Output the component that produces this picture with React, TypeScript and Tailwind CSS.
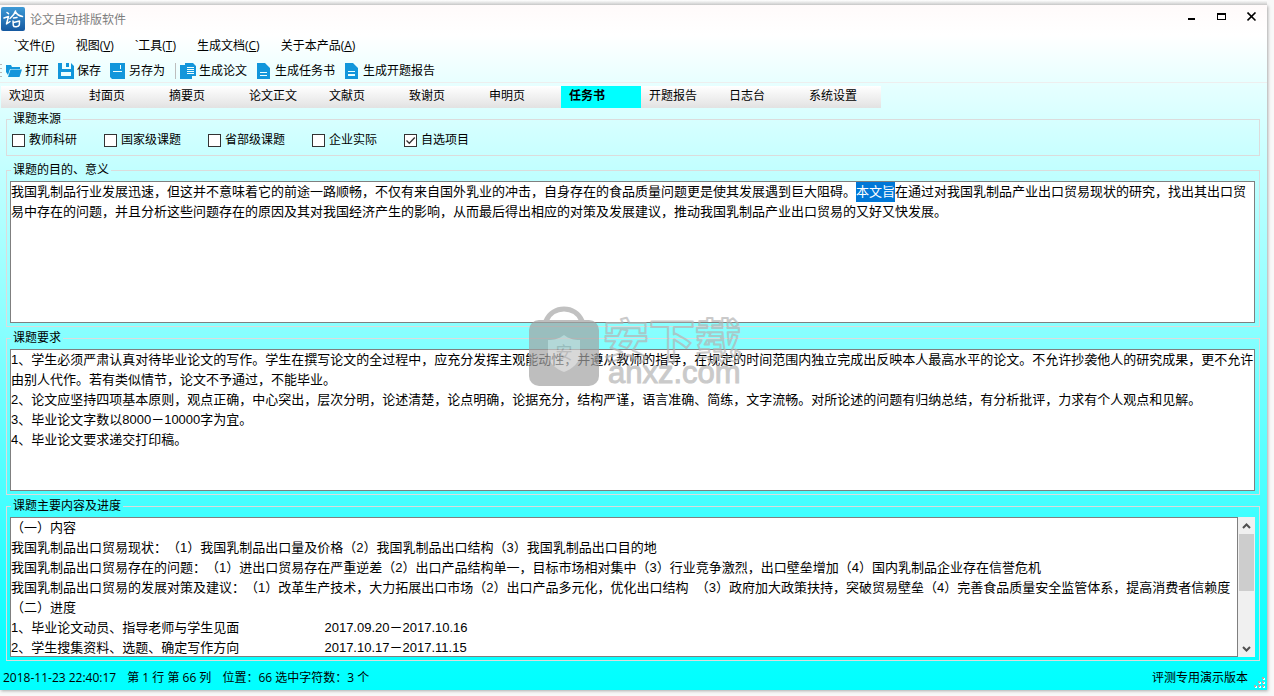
import { useEffect, useRef } from 'react';

const MENUS = [
  { label: '`文件', key: 'F' },
  { label: '视图', key: 'V' },
  { label: '`工具', key: 'T' },
  { label: '生成文档', key: 'C' },
  { label: '关于本产品', key: 'A' },
];

const TABS = ['欢迎页', '封面页', '摘要页', '论文正文', '文献页', '致谢页', '申明页', '任务书', '开题报告', '日志台', '系统设置'];

const SOURCES = [
  { id: 'research', label: '教师科研', checked: false },
  { id: 'national', label: '国家级课题', checked: false },
  { id: 'province', label: '省部级课题', checked: false },
  { id: 'company', label: '企业实际', checked: false },
  { id: 'custom', label: '自选项目', checked: true },
];

const PURPOSE =
  '我国乳制品行业发展迅速，但这并不意味着它的前途一路顺畅，不仅有来自国外乳业的冲击，自身存在的食品质量问题更是使其发展遇到巨大阻碍。本文旨在通过对我国乳制品产业出口贸易现状的研究，找出其出口贸易中存在的问题，并且分析这些问题存在的原因及其对我国经济产生的影响，从而最后得出相应的对策及发展建议，推动我国乳制品产业出口贸易的又好又快发展。';

const REQUIREMENTS = [
  '1、学生必须严肃认真对待毕业论文的写作。学生在撰写论文的全过程中，应充分发挥主观能动性，并遵从教师的指导，在规定的时间范围内独立完成出反映本人最高水平的论文。不允许抄袭他人的研究成果，更不允许由别人代作。若有类似情节，论文不予通过，不能毕业。',
  '2、论文应坚持四项基本原则，观点正确，中心突出，层次分明，论述清楚，论点明确，论据充分，结构严谨，语言准确、简练，文字流畅。对所论述的问题有归纳总结，有分析批评，力求有个人观点和见解。',
  '3、毕业论文字数以8000－10000字为宜。',
  '4、毕业论文要求递交打印稿。',
].join('\n');

const SCHEDULE = [
  '（一）内容',
  '我国乳制品出口贸易现状：（1）我国乳制品出口量及价格（2）我国乳制品出口结构（3）我国乳制品出口目的地',
  '我国乳制品出口贸易存在的问题：（1）进出口贸易存在严重逆差（2）出口产品结构单一，目标市场相对集中（3）行业竞争激烈，出口壁垒增加（4）国内乳制品企业存在信誉危机',
  '我国乳制品出口贸易的发展对策及建议：（1）改革生产技术，大力拓展出口市场（2）出口产品多元化，优化出口结构  （3）政府加大政策扶持，突破贸易壁垒（4）完善食品质量安全监管体系，提高消费者信赖度',
  '（二）进度',
  '1、毕业论文动员、指导老师与学生见面　　　　　　  2017.09.20－2017.10.16',
  '2、学生搜集资料、选题、确定写作方向　　　　　　  2017.10.17－2017.11.15',
].join('\n');

const BOX =
  'block w-full min-w-0 flex-1 resize-none overflow-hidden border border-[#7f7f7f] bg-white text-[13px] leading-[20px] outline-none selection:bg-[#0078d7] selection:text-white';

export default function App() {
  return (
    <div className="min-h-screen bg-[#f8f8f8] pr-[7px] font-['Liberation_Sans','Noto_Sans_CJK_SC',sans-serif] text-[12px] leading-[16px] text-black [text-spacing-trim:space-all]">
      <div className="h-[5px] bg-gradient-to-b from-white to-[#cfcfcf]" />
      <div className="flex flex-col bg-[linear-gradient(to_bottom,#fffafa_0px,#ffffff_30px,#e6ffff_80px,#c4ffff_160px,#88ffff_325px,#4affff_485px,#0affff_640px,#00ffff_685px)] shadow-[1px_1px_3px_#aaaaaa]">
        <TitleBar />
        <MenuBar />
        <ToolBar />
        <TabBar />
        <main className="flex flex-col pr-[7px] pl-[6px]">
          <SourceGroup />
          <Group title="课题的目的、意义" className="mt-[6px]">
            <PurposeBox />
          </Group>
          <Group title="课题要求" className="mt-[3px]">
            <textarea aria-label="课题要求" defaultValue={REQUIREMENTS} spellCheck={false} className={BOX + ' h-[142px]'} />
          </Group>
          <Group title="课题主要内容及进度" className="mt-[3px]">
            <div className="flex">
              <textarea
                aria-label="课题主要内容及进度"
                defaultValue={SCHEDULE}
                spellCheck={false}
                className={BOX + ' h-[140px]'}
              />
              <ScrollBar />
            </div>
          </Group>
        </main>
        <StatusBar />
      </div>
      <Watermark />
    </div>
  );
}

function TitleBar() {
  return (
    <header className="flex h-[30px] items-center">
      <svg width="26" height="26" viewBox="0 0 26 26" aria-hidden="true" className="shrink-0">
        <defs>
          <linearGradient id="logo" x1="0" y1="0" x2="0" y2="1">
            <stop offset="0" stopColor="#3f9ad6" />
            <stop offset="1" stopColor="#1558a0" />
          </linearGradient>
        </defs>
        <rect x="1" y="0" width="24" height="24" rx="2" fill="url(#logo)" />
        <g fill="none" stroke="#fff" strokeWidth="1.5" strokeLinecap="round" strokeLinejoin="round">
          <path d="M7 5.500l1.500 1.200M4 11l4.500-1.500L6.500 17l3.500-2.500" />
          <path d="M15.500 4c-1 3.500-3 5.500-5.500 7.500M15.500 5c1.500 2.500 4 4 7 4.500M13.500 11l3.500-.5M13 14l.3 4.500c.5 2 5.500 1.500 6-.5l.2-4-6 1.500" />
        </g>
      </svg>
      <h1 className="ml-[4px] flex-1 text-[#7d7d7d]">论文自动排版软件</h1>
      <div className="flex gap-[20px] self-start pt-[7px] pr-[10px]">
        <button type="button" aria-label="最小化">
          <svg width="10" height="10" viewBox="0 0 10 10" aria-hidden="true">
            <path d="M1 6h7v2H1z" />
          </svg>
        </button>
        <button type="button" aria-label="最大化">
          <svg width="10" height="10" viewBox="0 0 10 10" aria-hidden="true">
            <path fillRule="evenodd" d="M0 1h9v7H0zM1 3v4h7V3z" />
          </svg>
        </button>
        <button type="button" aria-label="关闭">
          <svg width="10" height="10" viewBox="0 0 10 10" fill="none" stroke="#000" strokeWidth="1.6" aria-hidden="true">
            <path d="M0.500 0.500l8 8M8.500 0.500l-8 8" />
          </svg>
        </button>
      </div>
    </header>
  );
}

function MenuBar() {
  return (
    <nav className="flex h-[22px] items-center gap-[21px] pl-[14px] font-['Open_Sans','Noto_Sans_CJK_SC',sans-serif]">
      {MENUS.map((menu) => (
        <button key={menu.key} type="button">
          {menu.label}(<span className="underline">{menu.key}</span>)
        </button>
      ))}
    </nav>
  );
}

function ToolBar() {
  return (
    <div role="toolbar" className="flex h-[26px] items-center border-b border-[#eeeeee] pt-[2px]">
      <svg width="6" height="16" viewBox="0 0 6 16" fill="#b8b8b8" aria-hidden="true" className="shrink-0">
        <path d="M0 1h2v1H0zM0 5h2v1H0zM0 9h2v1H0zM0 13h2v1H0z" />
      </svg>
      <ToolButton label="打开" className="w-[52px]">
        <path d="M0 2h5l1 2h8v2H4L2 12 0 9zM4.500 6.500H16L13.500 14H2z" />
      </ToolButton>
      <ToolButton label="保存" className="w-[52px]">
        <path fillRule="evenodd" d="M0 0h4v6h9V0l3 3v13H0zM8 0h3v4H8zM3 9v4h10V9z" />
      </ToolButton>
      <ToolButton label="另存为" className="w-[65px]">
        <path fillRule="evenodd" d="M0 0h15v16H2l-2-2zM3 8v1h9V8zM10 2v4h1V2z" />
      </ToolButton>
      <div className="mr-[4px] h-[16px] w-px bg-[#bdbdbd]" />
      <ToolButton label="生成论文" className="w-[76px]">
        <path fillRule="evenodd" d="M0 2h5V0h8l3 3v10h-4v3H0zM7 4v1h7V4zM7 6v1h7V6zM7 8v1h7V8zM7 10v1h7v-1z" />
      </ToolButton>
      <ToolButton label="生成任务书" className="w-[88px]">
        <path fillRule="evenodd" d="M1 0h8l5 5v11H1zM4 9v1h7V9zM4 12v1h7v-1z" />
      </ToolButton>
      <ToolButton label="生成开题报告">
        <path fillRule="evenodd" d="M1 0h8l5 5v11H1zM4 8v1h7V8zM4 11v2h7v-2z" />
      </ToolButton>
    </div>
  );
}

interface ToolButtonProps {
  label: string;
  className?: string;
  children: React.ReactNode;
}

function ToolButton({ label, className = '', children }: ToolButtonProps) {
  return (
    <button type="button" className={`flex shrink-0 items-center gap-[3px] whitespace-nowrap ${className}`}>
      <svg width="16" height="16" viewBox="0 0 16 16" fill="#1296db" aria-hidden="true" className="shrink-0">
        {children}
      </svg>
      {label}
    </button>
  );
}

function TabBar() {
  return (
    <div role="tablist" className="mt-[3px] ml-px flex h-[22px]">
      {TABS.map((tab) => (
        <button
          key={tab}
          type="button"
          role="tab"
          aria-selected={tab === '任务书'}
          className="w-[80px] bg-gradient-to-b from-white to-[#e2e2e2] px-[8px] pb-[3px] text-left aria-selected:bg-[#00ffff] aria-selected:bg-none aria-selected:font-bold"
        >
          {tab}
        </button>
      ))}
    </div>
  );
}

interface GroupProps {
  title: string;
  className?: string;
  children: React.ReactNode;
}

function Group({ title, className = '', children }: GroupProps) {
  return (
    <fieldset className={`min-w-0 border border-[#dcdcdc] pr-[4px] pb-[3px] pl-[3px] ${className}`}>
      <legend className="ml-px h-[16px] px-[2px]">{title}</legend>
      <div className="pt-[3px]">{children}</div>
    </fieldset>
  );
}

function SourceGroup() {
  return (
    <fieldset className="mt-[3px] min-w-0 border border-[#dcdcdc] px-[3px] pb-[7px]">
      <legend className="ml-px h-[16px] px-[2px]">课题来源</legend>
      <div className="flex gap-[27px] pt-[5px] pl-[2px]">
        {SOURCES.map((source) => (
          <label key={source.id} className="flex items-center gap-[4px]">
            <span className="grid size-[13px]">
              <input
                type="checkbox"
                defaultChecked={source.checked}
                className="peer col-start-1 row-start-1 size-[13px] appearance-none border border-[#333333] bg-white"
              />
              <svg
                viewBox="0 0 13 13"
                fill="none"
                stroke="#333333"
                strokeWidth="1.3"
                aria-hidden="true"
                className="pointer-events-none invisible col-start-1 row-start-1 peer-checked:visible"
              >
                <path d="M2.500 6.500l2.800 2.800L10.800 3.500" />
              </svg>
            </span>
            {source.label}
          </label>
        ))}
      </div>
    </fieldset>
  );
}

function PurposeBox() {
  const ref = useRef<HTMLTextAreaElement>(null);

  useEffect(() => {
    const start = PURPOSE.indexOf('本文旨');
    ref.current?.focus();
    ref.current?.setSelectionRange(start, start + 3);
  }, []);

  return (
    <textarea
      ref={ref}
      aria-label="课题的目的、意义"
      defaultValue={PURPOSE}
      spellCheck={false}
      className={BOX + ' h-[142px]'}
    />
  );
}

function ScrollBar() {
  return (
    <div className="flex w-[17px] shrink-0 flex-col bg-[#f0f0f0] px-px">
      <button type="button" aria-label="向上滚动" className="grid h-[17px] place-items-center">
        <svg width="9" height="6" viewBox="0 0 9 6" fill="none" stroke="#505050" strokeWidth="2" aria-hidden="true">
          <path d="M1 5l3.500-3.500L8 5" />
        </svg>
      </button>
      <div className="h-[57px] bg-[#cdcdcd]" />
      <div className="flex-1" />
      <button type="button" aria-label="向下滚动" className="grid h-[17px] place-items-center">
        <svg width="9" height="6" viewBox="0 0 9 6" fill="none" stroke="#505050" strokeWidth="2" aria-hidden="true">
          <path d="M1 1l3.500 3.500L8 1" />
        </svg>
      </button>
    </div>
  );
}

function StatusBar() {
  return (
    <footer className="flex h-[29px] items-center pt-[4px] pr-[2px] pl-[3px] font-['Open_Sans','Noto_Sans_CJK_SC',sans-serif]">
      <div className="flex flex-1 gap-[11px]">
        <span>2018-11-23 22:40:17</span>
        <span>第 1 行 第 66 列</span>
        <span>位置：66 选中字符数：3 个</span>
      </div>
      <span>评测专用演示版本</span>
      <svg width="11" height="11" viewBox="0 0 11 11" aria-hidden="true" className="mb-[2px] ml-[6px] self-end">
        <path fill="#fff" d="M9 1h2v2H9zM5 5h2v2H5zM9 5h2v2H9zM1 9h2v2H1zM5 9h2v2H5zM9 9h2v2H9z" />
        <path fill="#b5aaaa" d="M8 0h2v2H8zM4 4h2v2H4zM8 4h2v2H8zM0 8h2v2H0zM4 8h2v2H4zM8 8h2v2H8z" />
      </svg>
    </footer>
  );
}

function Watermark() {
  return (
    <svg
      width="216"
      height="86"
      viewBox="0 0 216 86"
      aria-hidden="true"
      className="pointer-events-none absolute top-[304px] left-[528px] opacity-70"
    >
      <path d="M18 17C24 1 48 1 54 17" fill="none" stroke="#a8a8a8" strokeWidth="5" />
      <rect x="1" y="16" width="70" height="66" rx="10" fill="#a3a3a3" />
      <path d="M36 31c5 4 10 5 16 5v14c0 9-8 15-16 18-8-3-16-9-16-18V36c6 0 11-1 16-5z" fill="#c8c8c8" />
      <text x="36" y="55" textAnchor="middle" fontSize="17" fill="#a0a0a0">
        安
      </text>
      <text x="75" y="53" fontSize="46" fontWeight="700" fill="none" stroke="#b4b4b4" strokeWidth="2" strokeLinejoin="round">
        安下载
      </text>
      <text x="80" y="79" fontSize="31" fill="#b4b4b4" stroke="#b4b4b4" strokeWidth="1">
        anxz.com
      </text>
    </svg>
  );
}
